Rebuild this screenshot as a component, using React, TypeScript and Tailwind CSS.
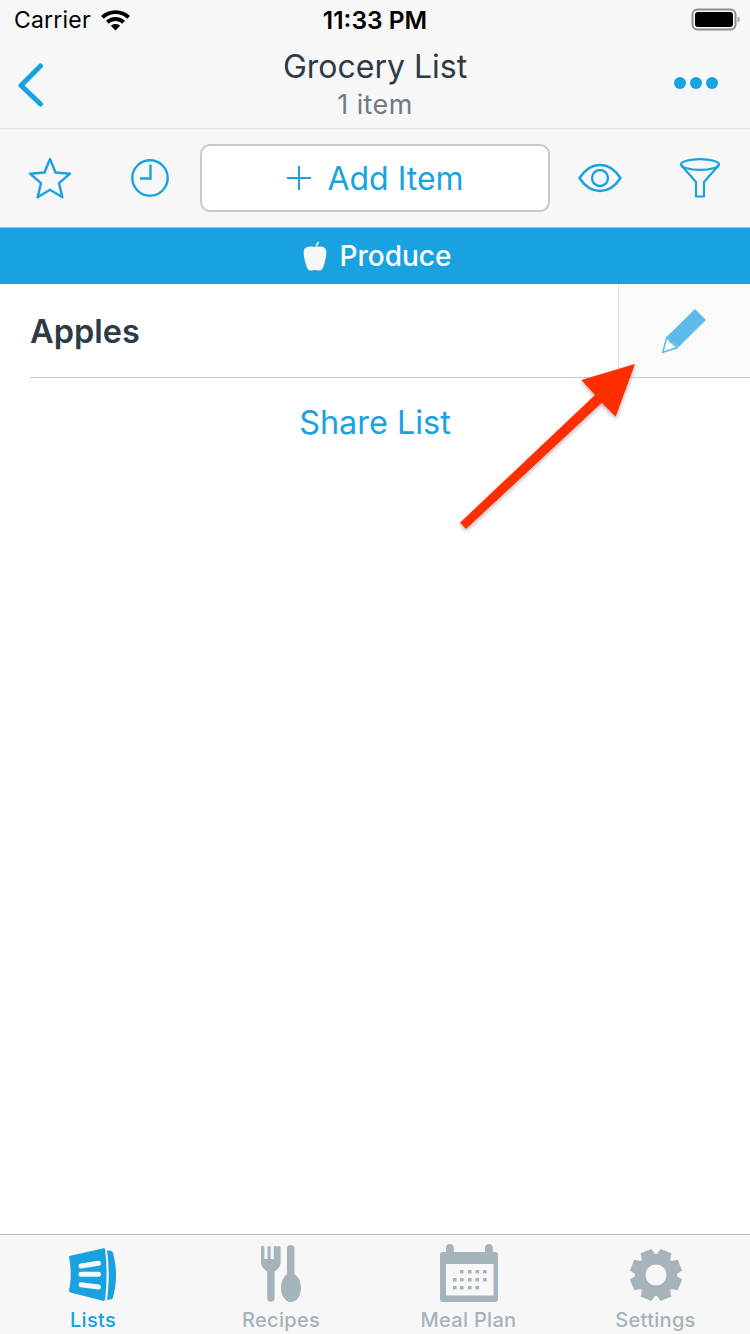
const blue = "#18a2e0";
const grey = "#a5b3ba";

function Wifi() {
  return (
    <svg width="29" height="22" viewBox="2.400 2.500 27.200 20.500" fill="#000">
      <path d="M16 3.500c5.200 0 10 2 13.600 5.400L27 11.600C24.100 8.900 20.200 7.200 16 7.200S7.900 8.900 5 11.600L2.400 8.900C6 5.500 10.800 3.500 16 3.500z" />
      <path d="M16 10c3.400 0 6.500 1.300 8.900 3.500l-2.600 2.700c-1.700-1.500-3.900-2.500-6.300-2.500s-4.600 1-6.300 2.500l-2.600-2.700C9.500 11.300 12.600 10 16 10z" />
      <path d="M16 16.500c1.700 0 3.200.6 4.300 1.700L16 22.500l-4.300-4.300c1.100-1.100 2.600-1.700 4.300-1.700z" />
    </svg>
  );
}

function Battery() {
  return (
    <svg width="50" height="24" viewBox="0 0 50 24">
      <rect x="1.500" y="1.500" width="43" height="20" rx="5" fill="none" stroke="#8e8e8e" strokeWidth="2" />
      <rect x="4" y="4" width="38" height="15" rx="3" fill="#000" />
      <path d="M46.500 8.500c1.500.4 2.300 1.500 2.300 3s-.8 2.600-2.300 3z" fill="#a8a8a8" />
    </svg>
  );
}

function StatusBar() {
  return (
    <div className="h-10 relative flex items-center justify-between pl-[14px] pr-[9px] text-black">
      <div className="flex items-center gap-[10px]">
        <span className="text-[23px] leading-none tracking-[0.2px]">Carrier</span>
        <Wifi />
      </div>
      <span className="absolute left-0 right-0 text-center text-[24.5px] leading-none font-semibold">11:33 PM</span>
      <Battery />
    </div>
  );
}

function NavBar() {
  return (
    <div className="h-[88px] relative flex items-center justify-between pl-[18px] pr-[32px]">
      <svg width="26" height="44" viewBox="0 0 26 44" fill="none" stroke={blue} strokeWidth="5" strokeLinecap="round" strokeLinejoin="round" className="mt-[1px]">
        <path d="M22.500 3 3 22.500 22.500 41" />
      </svg>
      <div className="absolute inset-x-0 top-[7px] flex flex-col items-center">
        <span className="text-[32px] leading-[40px] text-[#2e3b47]">Grocery List</span>
        <span className="text-[27px] leading-[32px] mt-[2px] text-[#6f7b83] tracking-[0.4px]">1 item</span>
      </div>
      <div className="flex gap-[4px] mt-[-2px]">
        <span className="w-3 h-3 rounded-full bg-[#18a2e0]" />
        <span className="w-3 h-3 rounded-full bg-[#18a2e0]" />
        <span className="w-3 h-3 rounded-full bg-[#18a2e0]" />
      </div>
    </div>
  );
}

function Star() {
  return (
    <svg width="44" height="42" viewBox="0 0 44 42" fill="none" stroke={blue} strokeWidth="2.400" strokeLinejoin="round">
      <path d="M22 2 27.500 15.500 42 16.700 31 26.200 34.400 40.300 22 32.800 9.600 40.300 13 26.200 2 16.700 16.500 15.500z" />
    </svg>
  );
}

function Clock() {
  return (
    <svg width="40" height="40" viewBox="0 0 40 40" fill="none" stroke={blue} strokeWidth="2.400">
      <circle cx="20" cy="20" r="17.700" />
      <path d="M20.500 6.500V20.500H10" />
    </svg>
  );
}

function Eye() {
  return (
    <svg width="44" height="30" viewBox="0 0 44 30" fill="none" stroke={blue} strokeWidth="2.400">
      <path d="M1.500 15C7 6.500 14 2 22 2s15 4.500 20.500 13C37 23.500 30 28 22 28S7 23.500 1.500 15z" />
      <circle cx="22" cy="15" r="8" />
    </svg>
  );
}

function Funnel() {
  return (
    <svg width="42" height="42" viewBox="0 0 42 42" fill="none" stroke={blue} strokeWidth="2.200" strokeLinejoin="round">
      <ellipse cx="21" cy="7.500" rx="19" ry="5.300" />
      <path d="M2 8 17 25V39.500H25V25L40 8" />
    </svg>
  );
}

function Toolbar() {
  return (
    <div className="h-[100px] border-t border-b border-t-[#dcdcdc] border-b-[#b4b9bc] flex items-center">
      <div className="w-[100px] flex justify-center"><Star /></div>
      <div className="w-[100px] flex justify-center"><Clock /></div>
      <div className="w-[350px] h-[68px] rounded-[10px] border-2 border-[#c8c8c8] bg-white flex items-center justify-center gap-[15px] text-[#18a2e0]">
        <svg width="26" height="26" viewBox="0 0 26 26" stroke={blue} strokeWidth="2">
          <path d="M13 1v24M1 13h24" />
        </svg>
        <span className="text-[32px] leading-none mt-[2px]">Add Item</span>
      </div>
      <div className="w-[100px] flex justify-center"><Eye /></div>
      <div className="w-[100px] flex justify-center"><Funnel /></div>
    </div>
  );
}

function Apple() {
  return (
    <svg width="24" height="30" viewBox="0 0 24 30" fill="#f7f7f7">
      <path d="M12.500 6C12.500 3.500 13.800 1.500 15.500.5l.9 1.300C15 2.800 14.300 4.200 14.200 6c3-1 8.300-.7 9 4 .5 3.500-.6 8-1.700 12-1 3.500-1.800 7-4.500 7.500-2 .4-3.300-.4-5-.4s-3 .8-5 .4C4.300 29 3.500 25.500 2.500 22 1.400 18 .3 13.500.8 10 1.500 5.300 8 5 12.500 6z" />
    </svg>
  );
}

function RowPencil() {
  return (
    <svg width="46" height="46" viewBox="0 0 46 46">
      <path d="M34 1 45 12 17 39.500 6 28.500z" fill="#5dbbe9" />
      <path d="M5.800 29.500 16 39.800 1.800 44.200z" fill="#ffffff" stroke="#5dbbe9" strokeWidth="1.600" />
      <path d="M7 32h5v4l-3-1z" fill="#5dbbe9" />
    </svg>
  );
}

function ListsIcon() {
  return (
    <svg width="48" height="54" viewBox="0 0 48 54">
      <path d="M1.500 7.700 34.500.3c1-.2 1.600.3 1.700 1.200 1.800 16.500 1.800 33 0 49.500-.1 1.300-1 2-2.300 1.700L1.500 44.600C.5 44.300 0 43.500 0 42.500c2.300-11 2.300-22.500 0-33.200 0-.8.500-1.400 1.500-1.600z" fill={blue} />
      <path d="M38 2.300l4.300.7c1 .2 1.300.6 1.500 1.400 4.300 14.500 4.300 31 0 45.500-.2.800-.7 1.200-1.500 1.300l-4.300.7c2.300-16.500 2.300-33.500 0-49.600z" fill={blue} />
      <path d="M12 18 29.500 15.300M12 26.300H29.500M12 36.700 29.500 39" fill="none" stroke="#f7f7f7" strokeWidth="5" strokeLinecap="round" />
    </svg>
  );
}

function RecipesIcon() {
  return (
    <svg width="40" height="57" viewBox="0 0 40 57" fill={grey}>
      <path d="M0 2.500a1.500 1.500 0 0 1 3.400 0V14h3.100V2.500a1.600 1.600 0 0 1 3.200 0V14h3.100V2.500a1.500 1.500 0 0 1 3.400 0 1 1 0 0 1 3.400 0V16c.4 5-2.500 8-6 10.500V53a3.700 3.700 0 0 1-7.400 0V26.500C2.500 24-.4 21 0 16z" />
      <path d="M26 3.700a3.700 3.700 0 0 1 7.400 0V29c3.600 2.400 6.600 7 6.600 14 0 8-4.500 14-10 14s-10-6-10-14c0-7 3-11.600 6-14z" />
    </svg>
  );
}

function CalendarIcon() {
  return (
    <svg width="58" height="58" viewBox="0 0 58 58" fill={grey}>
      <path d="M6 8V4a3.900 3.900 0 0 1 7.800 0v4h31.200V4a3.900 3.900 0 0 1 7.800 0v4h2.700c1.400 0 2.500 1.100 2.500 2.500V55c0 1.700-1.300 3-3 3H3c-1.700 0-3-1.300-3-3V10.500C0 9.100 1.100 8 2.500 8z" />
      <rect x="6" y="20" width="47.500" height="31.500" fill="#f7f7f7" />
      {[[20,26],[28,26],[35.500,26],[43,26],[13,34],[20,34],[28,34],[35.500,34],[43,34],[13,42],[20,42],[28,42],[35.500,42]].map(([x, y]) => (
        <rect key={`${x}-${y}`} x={x} y={y} width="3.600" height="3.400" />
      ))}
    </svg>
  );
}

function gearPath() {
  const pts: string[] = [];
  const cx = 27;
  const cy = 27;
  for (let i = 0; i < 8; i++) {
    const a = ((i * 45 + 22.500 - 90) * Math.PI) / 180;
    const spread = [
      [21, -0.340],
      [26.500, -0.220],
      [26.500, 0.220],
      [21, 0.340],
    ];
    for (const [r, d] of spread) {
      pts.push(`${(cx + r * Math.cos(a + d)).toFixed(2)} ${(cy + r * Math.sin(a + d)).toFixed(2)}`);
    }
  }
  return `M${pts.join("L")}Z M27 16.500a10.500 10.500 0 1 0 0 21 10.500 10.500 0 0 0 0-21z`;
}

function GearIcon() {
  return (
    <svg width="54" height="54" viewBox="0 0 54 54" fill={grey}>
      <path fillRule="evenodd" d={gearPath()} />
    </svg>
  );
}

function Tab({ label, icon, active }: { label: string; icon: React.ReactNode; active?: boolean }) {
  return (
    <div className="flex flex-col items-center">
      <div className="h-[68px] flex items-end justify-center pb-[1px]">{icon}</div>
      <span className={`text-[20px] leading-[24px] font-medium tracking-[0.3px] whitespace-nowrap mt-[5px] ${active ? "text-[#18a2e0]" : "text-[#a5b3ba]"}`}>{label}</span>
    </div>
  );
}

export default function App() {
  return (
    <div className="w-[750px] h-[1334px] relative flex flex-col bg-white overflow-hidden font-['Inter','Liberation_Sans',sans-serif]">
      <div className="bg-[#f7f7f7]">
        <StatusBar />
        <NavBar />
        <Toolbar />
      </div>

      <div className="h-[56px] bg-[#18a2e0] flex items-center justify-center gap-[13px] pl-[4px] text-white">
        <Apple />
        <span className="text-[28px] leading-none font-medium">Produce</span>
      </div>

      <div className="h-[94px] flex pl-[30px]">
        <div className="flex-1 flex items-center border-b border-[#c8c8c8]">
          <span className="text-[32.5px] leading-none font-semibold text-[#2e3b47] mt-[3px]">Apples</span>
        </div>
        <div className="w-[132px] bg-[#fafafa] border-l border-b border-l-[#e4e4e4] border-b-[#c8c8c8] flex items-start pl-[42px] pt-[24px]">
          <RowPencil />
        </div>
      </div>

      <div className="h-[90px] flex items-center justify-center">
        <span className="text-[32.400px] leading-none text-[#18a2e0]">Share List</span>
      </div>

      <div className="flex-1" />

      <div className="h-[100px] bg-[#f7f7f7] border-t border-[#bcbcbc] grid grid-cols-[186px_190px_185px_189px]">
        <Tab label="Lists" icon={<ListsIcon />} active />
        <Tab label="Recipes" icon={<RecipesIcon />} />
        <Tab label="Meal Plan" icon={<CalendarIcon />} />
        <Tab label="Settings" icon={<GearIcon />} />
      </div>

      <svg className="absolute left-[450px] top-[355px]" width="195" height="185" viewBox="450 355 195 185">
        <defs>
          <filter id="arrowShadow" x="-10%" y="-10%" width="120%" height="120%">
            <feDropShadow dx="0" dy="2" stdDeviation="2" floodColor="#000" floodOpacity="0.3" />
          </filter>
        </defs>
        <path d="M635 364 581.300 380 595 395 460 522.700 466 529 601.700 402.700 615.700 416.700z" fill="#ff2d00" filter="url(#arrowShadow)" />
      </svg>
    </div>
  );
}
